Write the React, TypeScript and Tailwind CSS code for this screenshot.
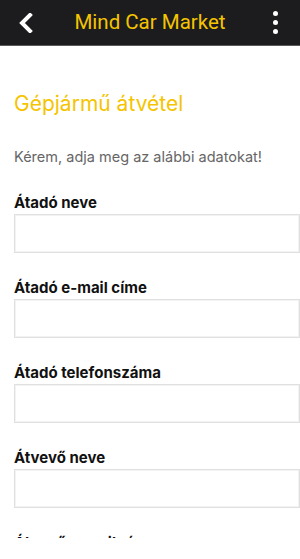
const fields = [
  "Átadó neve",
  "Átadó e-mail címe",
  "Átadó telefonszáma",
  "Átvevő neve",
  "Átvevő e-mail címe",
];

export default function App() {
  return (
    <div className="h-[559px] w-[300px] overflow-hidden bg-white font-['Inter',sans-serif]">
      {/* Top bar */}
      <header className="flex h-[46px] items-center border-b border-[#5a5a5a] bg-[#1c1c1e]">
        <button className="flex w-[50px] items-center justify-center pl-[2px]">
          <svg width="14" height="20" viewBox="0 0 14 20">
            <path d="M11 2 L3 10 L11 18" fill="none" stroke="#fff" strokeWidth="4" strokeLinecap="square" />
          </svg>
        </button>
        <h1 className="flex-1 text-center font-['Roboto',sans-serif] text-[20.5px] text-[#f5c400]">
          Mind Car Market
        </h1>
        <button className="flex w-[50px] flex-col items-center gap-[4px] pl-[1px]">
          <span className="h-[5px] w-[5px] rounded-full bg-white" />
          <span className="h-[5px] w-[5px] rounded-full bg-white" />
          <span className="h-[5px] w-[5px] rounded-full bg-white" />
        </button>
      </header>

      {/* Form, clipped at the bottom like the scroll view */}
      <main className="h-[492px] overflow-hidden pl-[14px]">
        <h2 className="mt-[44px] text-[21px] leading-[28px] text-[#f5c400]">Gépjármű átvétel</h2>
        <p className="mt-[29px] text-[14.5px] leading-[20px] text-[#666]">
          Kérem, adja meg az alábbi adatokat!
        </p>
        <div className="mt-[26px] flex flex-col gap-[25px]">
          {fields.map((f) => (
            <label key={f} className="block">
              <span className="block text-[15px] font-bold leading-[20px] text-[#111]">{f}</span>
              <input className="mt-[1px] block h-[39px] w-[286px] border border-[#e0e0e0] bg-white shadow-[inset_0_0_0_1px_#f3f3f3]" />
            </label>
          ))}
        </div>
      </main>
    </div>
  );
}
